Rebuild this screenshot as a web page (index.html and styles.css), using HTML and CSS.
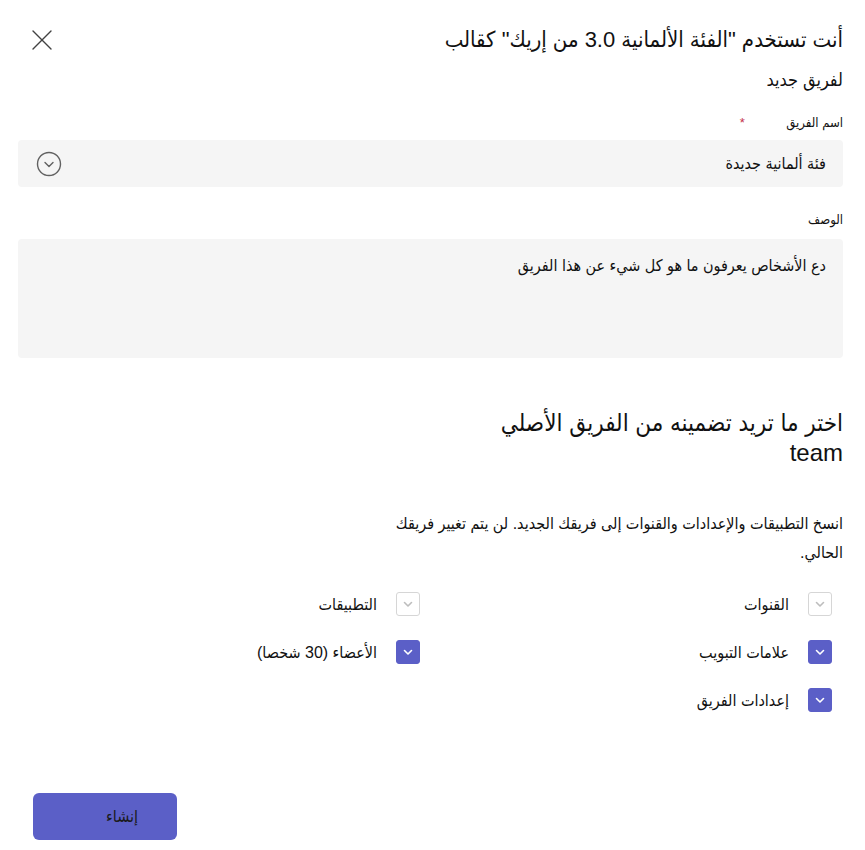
FILE: index.html
```html
<!DOCTYPE html>
<html lang="ar" dir="rtl">
<head>
  <meta charset="UTF-8">
  <meta name="viewport" content="width=device-width, initial-scale=1.0">
  <title>إنشاء فريق</title>
  <link rel="stylesheet" href="styles.css">
</head>
<body>
  <div class="dialog">
    <div class="header">
      <h1 class="title">أنت تستخدم "الفئة الألمانية 3.0 من إريك" كقالب</h1>
      <button class="close-btn" aria-label="إغلاق">
        <svg width="20" height="20" viewBox="0 0 20 20" fill="none" stroke="currentColor" stroke-width="1.4" stroke-linecap="round">
          <line x1="1" y1="1" x2="19" y2="19"></line>
          <line x1="19" y1="1" x2="1" y2="19"></line>
        </svg>
      </button>
    </div>
    <div class="subtitle">لفريق جديد</div>

    <div class="field">
      <label class="field-label">اسم الفريق <span class="required">*</span></label>
      <div class="input-box">
        <span class="input-text">فئة ألمانية جديدة</span>
        <svg class="input-icon" width="26" height="26" viewBox="0 0 26 26" fill="none" stroke="currentColor" stroke-width="1.4" stroke-linecap="round" stroke-linejoin="round">
          <circle cx="13" cy="13" r="11.5"></circle>
          <polyline points="9 11.5 13 15.5 17 11.5"></polyline>
        </svg>
      </div>
    </div>

    <div class="field field-desc">
      <label class="field-label">الوصف</label>
      <div class="textarea-box">دع الأشخاص يعرفون ما هو كل شيء عن هذا الفريق</div>
    </div>

    <h2 class="section-title">اختر ما تريد تضمينه من الفريق الأصلي<br>team</h2>
    <p class="section-text">انسخ التطبيقات والإعدادات والقنوات إلى فريقك الجديد. لن يتم تغيير فريقك<br>الحالي.</p>

    <div class="options">
      <div class="option">
        <span class="check"><svg width="12" height="12" viewBox="0 0 12 12" fill="none" stroke="currentColor" stroke-width="1.6" stroke-linecap="round" stroke-linejoin="round"><polyline points="2.5 4.5 6 8 9.5 4.5"></polyline></svg></span>
        القنوات
      </div>
      <div class="option">
        <span class="check"><svg width="12" height="12" viewBox="0 0 12 12" fill="none" stroke="currentColor" stroke-width="1.6" stroke-linecap="round" stroke-linejoin="round"><polyline points="2.5 4.5 6 8 9.5 4.5"></polyline></svg></span>
        التطبيقات
      </div>
      <div class="option">
        <span class="check checked"><svg width="12" height="12" viewBox="0 0 12 12" fill="none" stroke="currentColor" stroke-width="1.6" stroke-linecap="round" stroke-linejoin="round"><polyline points="2.5 4.5 6 8 9.5 4.5"></polyline></svg></span>
        علامات التبويب
      </div>
      <div class="option">
        <span class="check checked"><svg width="12" height="12" viewBox="0 0 12 12" fill="none" stroke="currentColor" stroke-width="1.6" stroke-linecap="round" stroke-linejoin="round"><polyline points="2.5 4.5 6 8 9.5 4.5"></polyline></svg></span>
        الأعضاء (30 شخصا)
      </div>
      <div class="option">
        <span class="check checked"><svg width="12" height="12" viewBox="0 0 12 12" fill="none" stroke="currentColor" stroke-width="1.6" stroke-linecap="round" stroke-linejoin="round"><polyline points="2.5 4.5 6 8 9.5 4.5"></polyline></svg></span>
        إعدادات الفريق
      </div>
    </div>

    <div class="footer">
      <button class="create-btn">إنشاء</button>
    </div>
  </div>
</body>
</html>
```

FILE: styles.css
```css
* {
  box-sizing: border-box;
  margin: 0;
  padding: 0;
  font-family: 'Liberation Sans', 'DejaVu Sans Condensed', 'DejaVu Sans', sans-serif;
}

body {
  background-color: #fff;
  color: #111;
}

.dialog {
  padding: 24px 22px 0 18px;
  display: flex;
  flex-direction: column;
}

.header {
  display: flex;
  align-items: center;
  justify-content: space-between;
}

.title {
  font-size: 22px;
  font-weight: 400;
  line-height: 32px;
}

.close-btn {
  background: none;
  border: none;
  color: #424242;
  margin-left: 14px;
  display: flex;
  cursor: pointer;
}

.subtitle {
  font-size: 18px;
  line-height: 28px;
  margin-top: 10px;
}

.field {
  margin-top: 19px;
}

.field-desc {
  margin-top: 23px;
}

.field-label {
  display: block;
  font-size: 13px;
  line-height: 20px;
  margin-bottom: 7px;
}

.field-desc .field-label {
  margin-bottom: 9px;
}

.required {
  color: #c4314b;
  margin-right: 38px;
}

.input-box {
  height: 47px;
  background-color: #f5f5f5;
  border-radius: 4px;
  display: flex;
  align-items: center;
  justify-content: space-between;
  padding: 0 17px 0 18px;
  font-size: 16px;
}

.input-icon {
  color: #616161;
}

.textarea-box {
  height: 119px;
  background-color: #f5f5f5;
  border-radius: 4px;
  padding: 16px 17px;
  font-size: 16px;
  line-height: 22px;
}

.section-title {
  font-size: 24px;
  font-weight: 400;
  line-height: 30px;
  margin-top: 50px;
}

.section-text {
  font-size: 16px;
  line-height: 29px;
  margin-top: 41px;
}

.options {
  display: grid;
  grid-template-columns: 412px 412px;
  row-gap: 24px;
  margin-top: 25px;
  padding-right: 11px;
}

.option {
  display: flex;
  align-items: center;
  gap: 19px;
  height: 24px;
  font-size: 16px;
}

.check {
  width: 24px;
  height: 24px;
  border: 1px solid #d6d6d6;
  border-radius: 3px;
  color: #bdbdbd;
  display: flex;
  align-items: center;
  justify-content: center;
  flex-shrink: 0;
}

.check.checked {
  background-color: #5b5fc7;
  border-color: #5b5fc7;
  color: #fff;
}

.footer {
  margin-top: 81px;
  display: flex;
  justify-content: flex-end;
  padding-left: 15px;
}

.create-btn {
  width: 144px;
  height: 47px;
  background-color: #5b5fc7;
  border: none;
  border-radius: 6px;
  color: #1a1a1a;
  font-size: 16px;
  padding-left: 34px;
  cursor: pointer;
}
```
